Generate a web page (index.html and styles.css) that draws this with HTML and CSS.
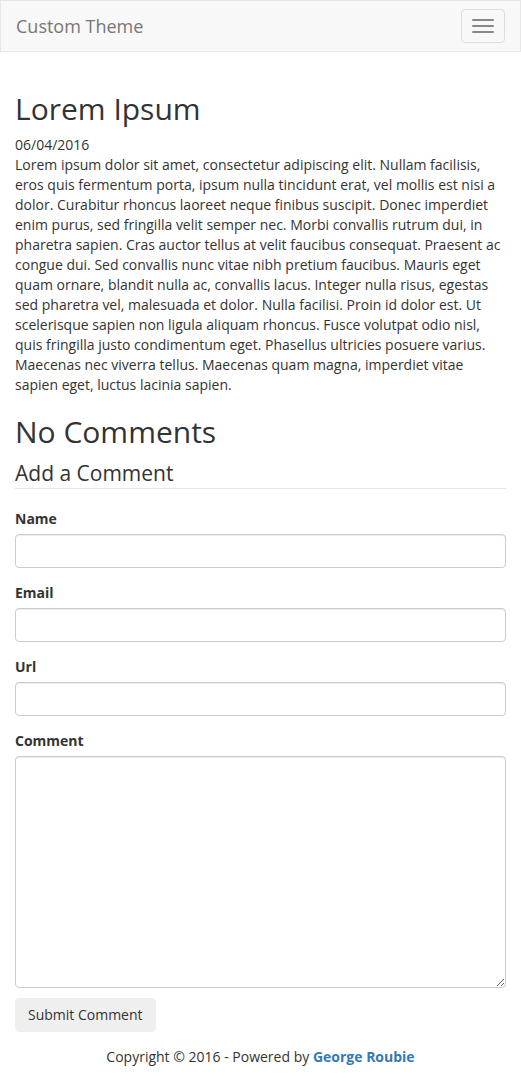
FILE: index.html
```html
<html>

<head>
    <title>Custom Theme</title>
    <link rel="stylesheet" href="styles.css">
</head>

<body>
    <nav class="navbar">
        <a class="brand" href="#">Custom Theme</a>
        <button class="toggle" type="button">
            <span class="icon-bar"></span>
            <span class="icon-bar"></span>
            <span class="icon-bar"></span>
        </button>
    </nav>

    <div class="container">
        <article class="post">
            <h1>Lorem Ipsum</h1>
            <div class="date">06/04/2016</div>
            <p>Lorem ipsum dolor sit amet, consectetur adipiscing elit. Nullam facilisis, eros quis fermentum porta, ipsum nulla tincidunt erat, vel mollis est nisi a dolor. Curabitur rhoncus laoreet neque finibus suscipit. Donec imperdiet enim purus, sed fringilla velit semper nec. Morbi convallis rutrum dui, in pharetra sapien. Cras auctor tellus at velit faucibus consequat. Praesent ac congue dui. Sed convallis nunc vitae nibh pretium faucibus. Mauris eget quam ornare, blandit nulla ac, convallis lacus. Integer nulla risus, egestas sed pharetra vel, malesuada et dolor. Nulla facilisi. Proin id dolor est. Ut scelerisque sapien non ligula aliquam rhoncus. Fusce volutpat odio nisl, quis fringilla justo condimentum eget. Phasellus ultricies posuere varius. Maecenas nec viverra tellus. Maecenas quam magna, imperdiet vitae sapien eget, luctus lacinia sapien.</p>
        </article>

        <h2>No Comments</h2>

        <form class="comment-form">
            <fieldset>
                <legend>Add a Comment</legend>
                <div class="form-group">
                    <label for="name">Name</label>
                    <input type="text" id="name" class="form-control">
                </div>
                <div class="form-group">
                    <label for="email">Email</label>
                    <input type="email" id="email" class="form-control">
                </div>
                <div class="form-group">
                    <label for="url">Url</label>
                    <input type="text" id="url" class="form-control">
                </div>
                <div class="form-group last">
                    <label for="comment">Comment</label>
                    <textarea id="comment" class="form-control comment-box"></textarea>
                </div>
                <button type="submit" class="btn">Submit Comment</button>
            </fieldset>
        </form>

        <footer class="footer">
            Copyright &copy; 2016 - Powered by <a href="#">George Roubie</a>
        </footer>
    </div>
</body>

</html>
```

FILE: styles.css
```css
/* base */
body {
  margin: 0;
  font-family: "Open Sans", "Liberation Sans", sans-serif;
  font-size: 14px;
  line-height: 1.42857143;
  color: #333;
  background-color: #fff;
}

a {
  color: #337ab7;
  text-decoration: none;
}

h1, h2 {
  font-weight: 400;
  line-height: 1.1;
  color: #333;
}

h1 {
  font-size: 30px;
  margin: 20px 0 10px;
}

h2 {
  font-size: 30px;
  margin: 20px 0 10px;
}

p {
  margin: 0 0 10px;
}

/* navbar */
.navbar {
  display: flex;
  justify-content: space-between;
  align-items: flex-start;
  height: 50px;
  background-color: #f8f8f8;
  border: 1px solid #e7e7e7;
  margin-bottom: 20px;
}

.brand {
  padding: 15px;
  font-size: 18px;
  line-height: 20px;
  color: #777;
}

.toggle {
  display: flex;
  flex-direction: column;
  gap: 4px;
  margin: 8px 15px 0 0;
  padding: 9px 10px;
  background: transparent;
  border: 1px solid #ddd;
  border-radius: 4px;
}

.icon-bar {
  display: block;
  width: 22px;
  height: 2px;
  border-radius: 1px;
  background-color: #888;
}

/* content */
.container {
  display: flow-root;
  padding: 0 15px;
}

/* comment form */
form {
  margin: 0;
}

fieldset {
  margin: 0;
  padding: 0;
  border: 0;
  min-width: 0;
}

legend {
  display: block;
  width: 100%;
  padding: 0;
  margin-bottom: 20px;
  font-size: 21px;
  line-height: inherit;
  color: #333;
  border: 0;
  border-bottom: 1px solid #e5e5e5;
}

.form-group {
  margin-bottom: 15px;
}

.form-group.last {
  margin-bottom: 10px;
}

label {
  display: inline-block;
  margin-bottom: 5px;
  font-weight: 700;
}

.form-control {
  display: block;
  box-sizing: border-box;
  width: 100%;
  height: 34px;
  padding: 6px 12px;
  font-family: inherit;
  font-size: 14px;
  line-height: 1.42857143;
  color: #555;
  background-color: #fff;
  border: 1px solid #ccc;
  border-radius: 4px;
  box-shadow: inset 0 1px 1px rgba(0, 0, 0, .075);
}

.comment-box {
  height: 232px;
}

.btn {
  display: inline-block;
  padding: 6px 12px;
  font-family: inherit;
  font-size: 14px;
  line-height: 1.42857143;
  color: #333;
  background-color: #efefef;
  border: 1px solid #efefef;
  border-radius: 4px;
  cursor: pointer;
}

/* footer */
.footer {
  text-align: center;
  padding: 15px 0 20px;
}

.footer a {
  font-weight: 700;
}
```
